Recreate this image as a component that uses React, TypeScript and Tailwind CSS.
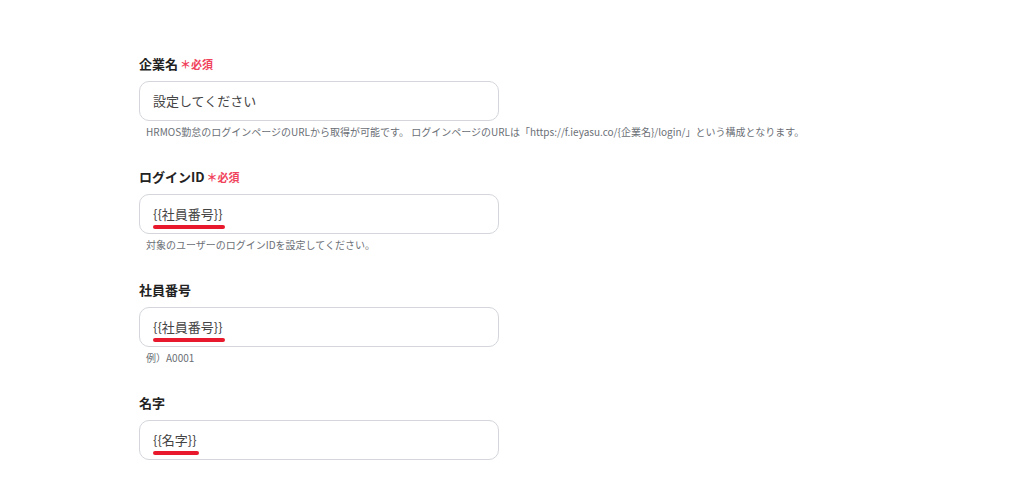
import React from "react";

const font = { fontFamily: '"Noto Sans CJK JP", "Noto Sans", sans-serif' };

function Required() {
  return (
    <span className="ml-[2px] text-[11px] font-bold text-[#f0435c]">＊必須</span>
  );
}

function Marked({ children }: { children: React.ReactNode }) {
  return (
    <span className="relative inline-block">
      {children}
      <span className="absolute left-[0px] right-[-2px] bottom-[-5px] h-[4px] rounded-full bg-[#e8192c]" />
    </span>
  );
}

function Field({
  label,
  required,
  value,
  placeholder,
  help,
}: {
  label: string;
  required?: boolean;
  value?: React.ReactNode;
  placeholder?: string;
  help?: string;
}) {
  return (
    <div className="flex flex-col">
      <div className="flex items-baseline h-[18px] text-[13px] font-bold text-[#222]">
        {label}
        {required && <Required />}
      </div>
      <div className="mt-[9px] h-[40px] w-[360px] rounded-[10px] border border-[#d4d6db] bg-white flex items-center px-[13px] text-[13px] text-[#444]">
        {value ?? <span className="text-[#444]">{placeholder}</span>}
      </div>
      <div className="h-[20px] pl-[7px] pt-[4px] text-[10px] leading-[14px] text-[#6b6f76] whitespace-nowrap">
        {help}
      </div>
    </div>
  );
}

export default function App() {
  return (
    <div className="w-[1027px] h-[485px] bg-white overflow-hidden" style={font}>
      <div className="pl-[139px] pt-[54px] flex flex-col gap-[26px]">
        <Field
          label="企業名"
          required
          placeholder="設定してください"
          help="HRMOS勤怠のログインページのURLから取得が可能です。 ログインページのURLは「https://f.ieyasu.co/{企業名}/login/」という構成となります。"
        />
        <Field
          label="ログインID"
          required
          value={<Marked>{"{{社員番号}}"}</Marked>}
          help="対象のユーザーのログインIDを設定してください。"
        />
        <Field
          label="社員番号"
          value={<Marked>{"{{社員番号}}"}</Marked>}
          help="例）A0001"
        />
        <Field label="名字" value={<Marked>{"{{名字}}"}</Marked>} />
      </div>
    </div>
  );
}
